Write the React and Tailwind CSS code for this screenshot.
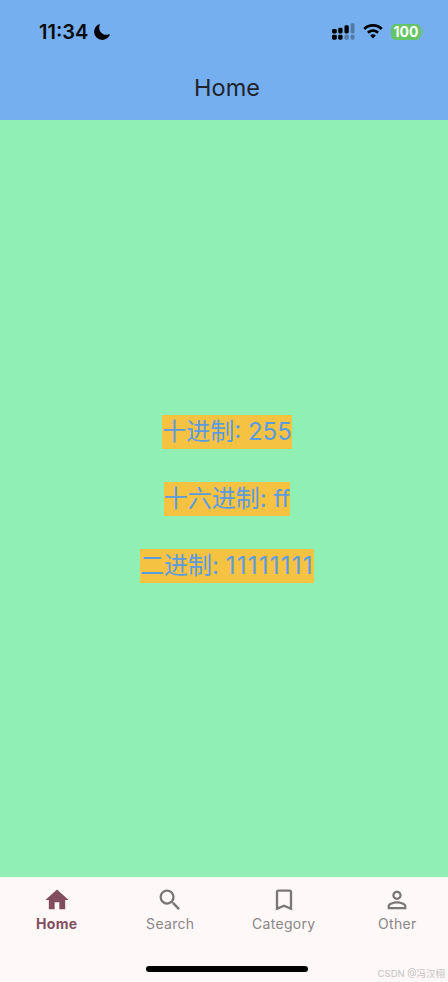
import React from "react";
import { MdHome, MdSearch, MdBookmarkBorder, MdPersonOutline } from "react-icons/md";
import { IoMoon } from "react-icons/io5";

const rows = [
  { label: "十进制: ", value: "255", valueClass: "" },
  { label: "十六进制: ", value: "ff", valueClass: "" },
  { label: "二进制: ", value: "11111111", valueClass: "tracking-[1.25px]" },
];

const tabs = [
  { label: "Home", icon: MdHome, active: true },
  { label: "Search", icon: MdSearch },
  { label: "Category", icon: MdBookmarkBorder },
  { label: "Other", icon: MdPersonOutline },
];

function SignalIcon() {
  return (
    <svg width="23" height="17" viewBox="0 0 24 17" className="shrink-0">
      <g fill="#000">
        <rect x="0" y="6" width="5" height="4.5" rx="1.5" />
        <rect x="0" y="12" width="5" height="5" rx="1.5" />
        <rect x="6.5" y="4.5" width="4.5" height="6" rx="1.5" />
        <rect x="6.5" y="12" width="4.5" height="5" rx="1.5" />
        <rect x="13" y="2" width="4.5" height="8.5" rx="1.5" />
      </g>
      <g fill="#000" fillOpacity="0.3">
        <rect x="13" y="12" width="4.5" height="5" rx="1.5" />
        <rect x="19.5" y="0" width="4" height="10.5" rx="1.5" />
        <rect x="19.5" y="12" width="4" height="5" rx="1.5" />
      </g>
    </svg>
  );
}

function WifiIcon() {
  return (
    <svg width="20" height="15" viewBox="0 0 20 15" className="shrink-0">
      <path
        d="M10 0C6.2 0 2.8 1.5.3 4l1.9 2C4.2 4 7 2.8 10 2.8S15.8 4 17.8 6l1.9-2C17.2 1.5 13.8 0 10 0z"
        fill="#000"
      />
      <path
        d="M10 5.2c-2.3 0-4.4.9-6 2.5l1.9 2c1.1-1.1 2.5-1.7 4.1-1.7s3 .6 4.1 1.7l1.9-2c-1.6-1.6-3.7-2.5-6-2.5z"
        fill="#000"
      />
      <path d="M10 10.2c-1.1 0-2.1.4-2.8 1.2L10 14.6l2.8-3.2c-.7-.8-1.7-1.2-2.8-1.2z" fill="#000" />
    </svg>
  );
}

function Battery() {
  return (
    <div className="flex items-center shrink-0">
      <div className="flex h-[16px] w-[30px] items-center justify-center rounded-[5px] bg-[#65C466] font-['Inter',sans-serif] text-[14px] font-bold leading-none text-white">
        100
      </div>
      <div className="ml-[1px] h-[5px] w-[1px] rounded-r bg-[#65C466]" />
    </div>
  );
}

export default function App() {
  return (
    <div className="relative h-[982px] w-[448px] overflow-hidden">
      <div className="flex h-[982px] w-[454px] flex-col bg-[#90F0B4] font-['Inter','Noto_Sans_CJK_SC',sans-serif]">
        <header className="flex h-[120px] shrink-0 flex-col bg-[#75AFF0]">
          <div className="flex h-[62px] items-center justify-between pl-[39px] pr-[31px] pt-[1px]">
            <div className="flex items-center gap-[5px]">
              <span className="text-[20px] font-semibold leading-none text-[#0a0a0a]">11:34</span>
              <IoMoon className="h-[18px] w-[18px] text-black" />
            </div>
            <div className="flex items-center gap-[8px]">
              <SignalIcon />
              <WifiIcon />
              <Battery />
            </div>
          </div>
          <h1 className="text-center text-[23.5px] font-normal leading-[52px] text-[#22242c]">Home</h1>
        </header>

        <main className="flex flex-1 flex-col items-center justify-center gap-[33px] pt-[1px]">
          {rows.map((row) => (
            <div
              key={row.label}
              className="bg-[#F5C242] text-[24px] leading-[34px] whitespace-pre text-[#5B9BE0]"
            >
              {row.label}
              <span className={row.valueClass}>{row.value}</span>
            </div>
          ))}
        </main>

        <footer className="flex h-[105px] shrink-0 flex-col bg-[#FFF8F8]">
          <nav className="grid grid-cols-4 pt-[9px]">
            {tabs.map((tab) => {
              const Icon = tab.icon;
              return (
                <div
                  key={tab.label}
                  className={`flex flex-col items-center ${tab.active ? "text-[#834D60]" : "text-[#7A7677]"}`}
                >
                  <Icon className="h-[28px] w-[28px]" />
                  <span
                    className={`text-[14px] leading-[20px] tracking-[0.3px] ${tab.active ? "font-bold" : "font-normal text-[#8A8687]"}`}
                  >
                    {tab.label}
                  </span>
                </div>
              );
            })}
          </nav>
          <div className="mt-[32px] h-[6px] w-[162px] self-center rounded-full bg-black" />
        </footer>
      </div>

      <span className="absolute bottom-[4px] right-[3px] font-['Inter','Noto_Sans_CJK_SC',sans-serif] text-[9.5px] leading-none text-[#c4c2c2]">
        CSDN @冯汉栩
      </span>
    </div>
  );
}
